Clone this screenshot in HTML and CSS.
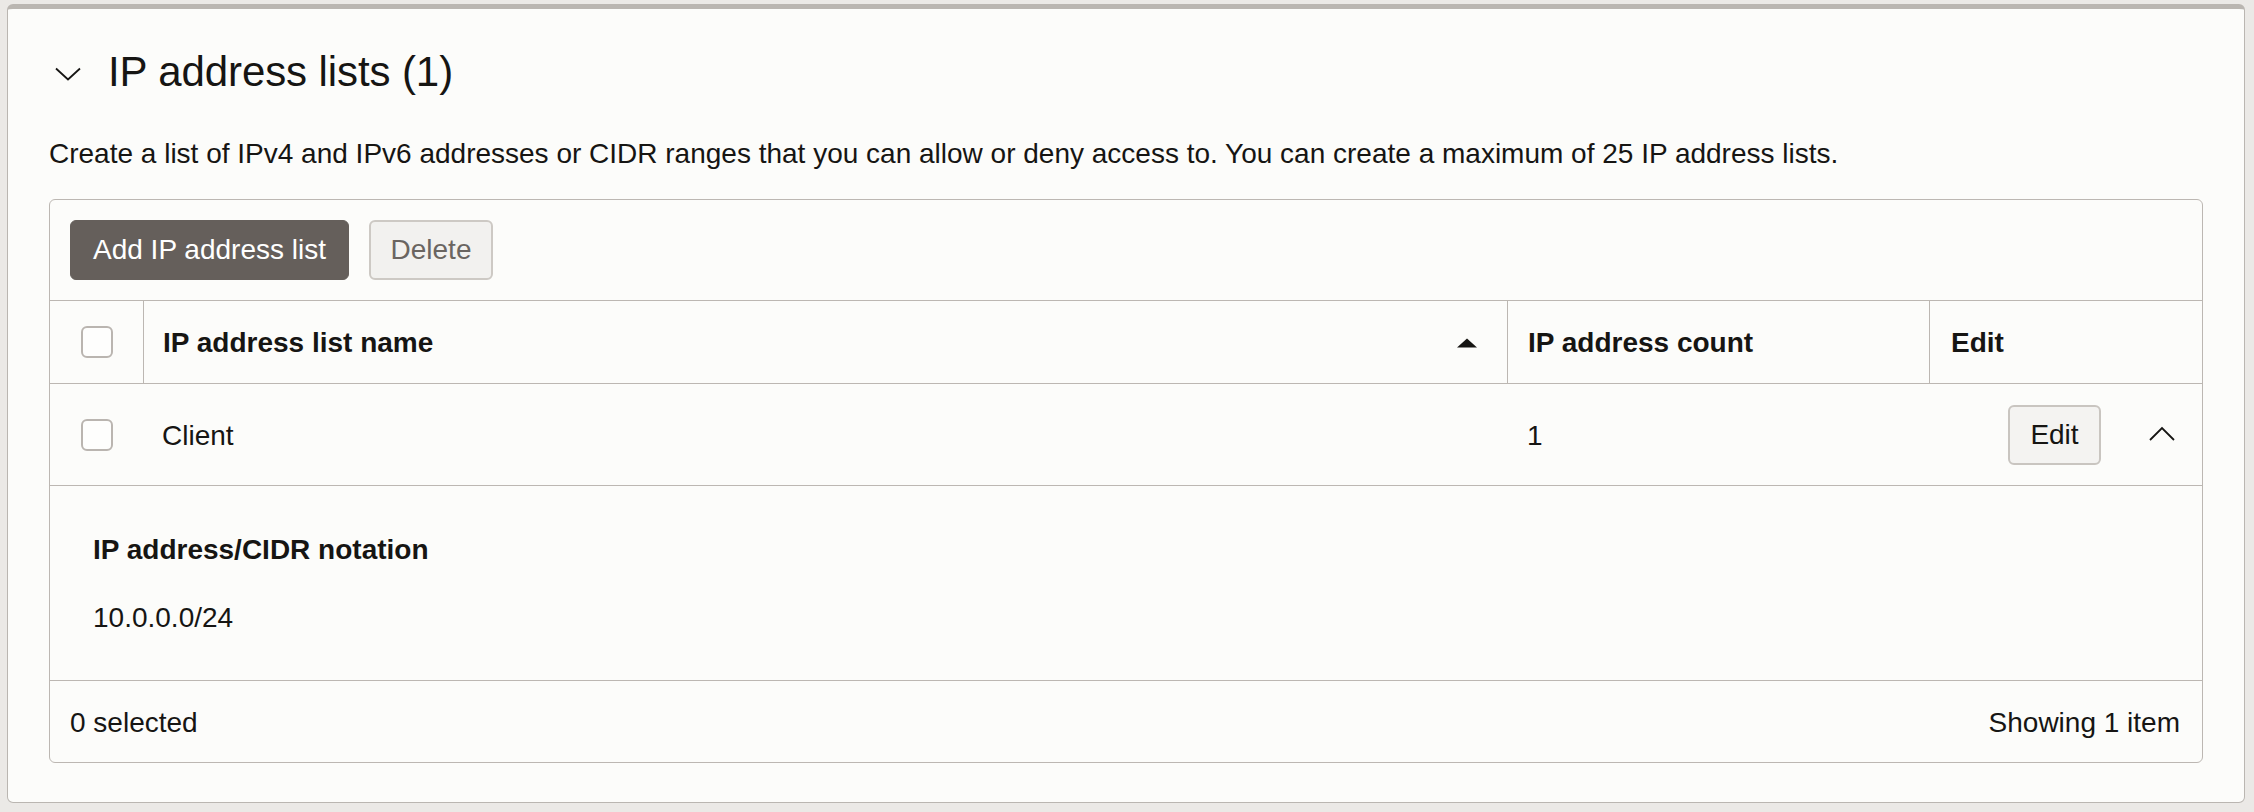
FILE: index.html
```html
<!DOCTYPE html>
<html lang="en">
<head>
<meta charset="utf-8">
<title>IP address lists</title>
<link rel="stylesheet" href="styles.css">
</head>
<body>
<div class="page">
  <section class="panel">
    <div class="panel-head">
      <svg class="chev-down" width="26" height="14" viewBox="0 0 26 14"><path d="M1 1.5 L13 12.5 L25 1.5" fill="none" stroke="#161513" stroke-width="1.8"/></svg>
      <h2 class="title">IP address lists (1)</h2>
    </div>
    <p class="desc">Create a list of IPv4 and IPv6 addresses or CIDR ranges that you can allow or deny access to. You can create a maximum of 25 IP address lists.</p>

    <div class="table">
      <div class="toolbar">
        <button class="btn btn-primary">Add IP address list</button>
        <button class="btn btn-disabled">Delete</button>
      </div>

      <div class="row head-row">
        <div class="cell cell-check"><span class="checkbox"></span></div>
        <div class="cell cell-name divided">
          <span>IP address list name</span>
          <svg class="sort" width="20" height="10" viewBox="0 0 20 10"><polygon points="0,9.5 10,0.5 20,9.5" fill="#161513"/></svg>
        </div>
        <div class="cell cell-count divided">IP address count</div>
        <div class="cell cell-edit divided">Edit</div>
      </div>

      <div class="row data-row">
        <div class="cell cell-check"><span class="checkbox"></span></div>
        <div class="cell cell-name">Client</div>
        <div class="cell cell-count">1</div>
        <div class="cell cell-actions">
          <button class="btn btn-edit">Edit</button>
          <svg class="chev-up" width="26" height="15" viewBox="0 0 26 15"><path d="M1 14 L13 2 L25 14" fill="none" stroke="#161513" stroke-width="1.8"/></svg>
        </div>
      </div>

      <div class="detail">
        <div class="detail-label">IP address/CIDR notation</div>
        <div class="detail-value">10.0.0.0/24</div>
      </div>

      <div class="footer">
        <span>0 selected</span>
        <span>Showing 1 item</span>
      </div>
    </div>
  </section>
</div>
</body>
</html>
```

FILE: styles.css
```css
* {
  box-sizing: border-box;
}

html, body {
  margin: 0;
  padding: 0;
}

body {
  background: #ebe9e6;
  font-family: "Liberation Sans", Arial, Helvetica, sans-serif;
  color: #161513;
  width: 2254px;
  height: 812px;
  overflow: hidden;
}

.page {
  padding: 4px 9px 0 7px;
}

.panel {
  background: #fcfcfa;
  border: 1px solid #bab6b1;
  border-top: 5px solid #bab6b1;
  border-radius: 6px;
  padding: 38px 41px 39px 41px;
}

.panel-head {
  display: flex;
  align-items: center;
  height: 50px;
}

.chev-down {
  display: block;
  margin-left: 6px;
  margin-right: 27px;
  margin-top: 4px;
}

.title {
  margin: 0;
  font-size: 42px;
  line-height: 50px;
  font-weight: 400;
  letter-spacing: -0.1px;
}

.desc {
  margin: 39px 0 0 0;
  font-size: 28px;
  line-height: 36px;
}

.table {
  margin-top: 27px;
  border: 1px solid #bcb7b2;
  border-radius: 6px;
  font-size: 28px;
  line-height: 36px;
}

.toolbar {
  display: flex;
  gap: 20px;
  padding: 20px 20px 20px 20px;
  border-bottom: 1px solid #bcb7b2;
}

.btn {
  font-family: inherit;
  font-size: 28px;
  line-height: 36px;
  height: 60px;
  border-radius: 6px;
  margin: 0;
  cursor: pointer;
}

.btn-primary {
  background: #655f5b;
  border: 1px solid #655f5b;
  color: #ffffff;
  padding: 0 21px;
  width: 279px;
}

.btn-disabled {
  background: #f2f1ef;
  border: 2px solid #cdc9c4;
  color: #6a6561;
  width: 124px;
  padding: 0;
}

.row {
  display: grid;
  grid-template-columns: 93px 1364px 422px 1fr;
  border-bottom: 1px solid #bcb7b2;
}

.head-row {
  height: 83px;
  font-weight: 700;
}

.data-row {
  height: 102px;
}

.cell {
  display: flex;
  align-items: center;
  min-width: 0;
  padding-top: 2px;
}

.divided {
  border-left: 1px solid #bcb7b2;
}

.cell-check {
  justify-content: center;
  padding-left: 1px;
  padding-top: 0;
}

.checkbox {
  display: block;
  width: 32px;
  height: 32px;
  border: 2px solid #bab5b0;
  border-radius: 6px;
  background: #fefefd;
}

.cell-name {
  padding-left: 19px;
  padding-right: 30px;
  justify-content: space-between;
}

.cell-count {
  padding-left: 20px;
}

.cell-edit {
  padding-left: 21px;
}

.cell-actions {
  justify-content: flex-end;
  padding-right: 27px;
  padding-top: 0;
  gap: 48px;
}

.btn-edit {
  background: #f4f3f1;
  border: 2px solid #c9c5c0;
  color: #161513;
  width: 93px;
  height: 60px;
  padding: 0;
}

.chev-up {
  display: block;
  margin-top: -2px;
}

.detail {
  padding: 46px 43px 44px 43px;
  border-bottom: 1px solid #bcb7b2;
}

.detail-label {
  font-weight: 700;
}

.detail-value {
  margin-top: 32px;
}

.footer {
  height: 81px;
  display: flex;
  align-items: center;
  justify-content: space-between;
  padding: 2px 22px 0 20px;
}
```
